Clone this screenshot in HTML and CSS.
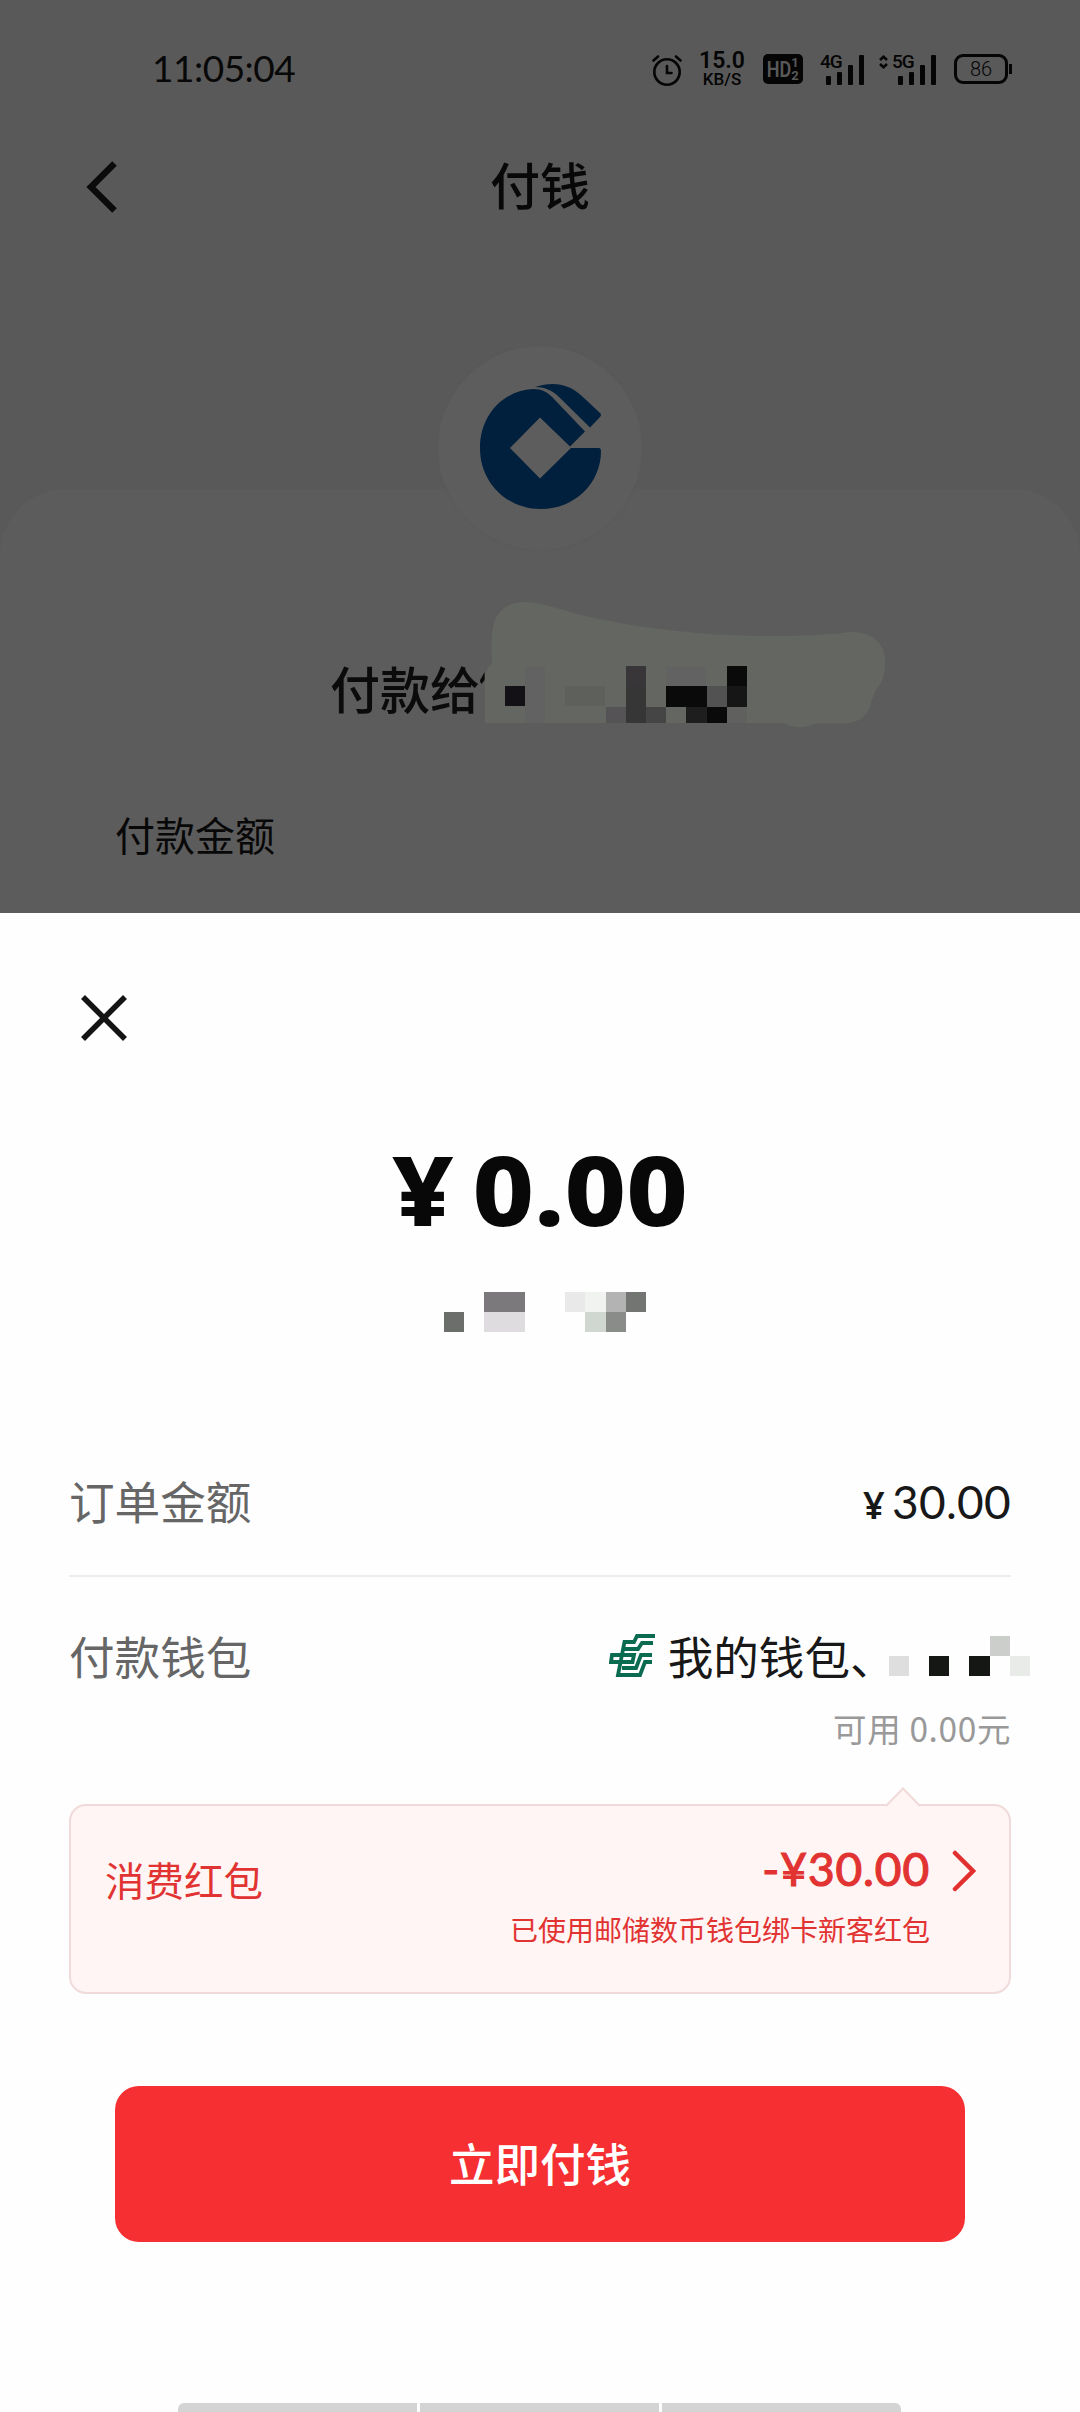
FILE: index.html
```html
<!DOCTYPE html>
<html lang="zh-CN">
<head>
<meta charset="utf-8">
<title>付钱</title>
<link rel="stylesheet" href="styles.css">
</head>
<body>
<div class="page">
  <header class="status">
    <div class="clock">11:05:04</div>
    <div class="indicators">
      <svg class="alarm" width="30" height="32" viewBox="0 0 30 32" fill="none" stroke="#050505" stroke-width="2.6" stroke-linecap="round"><circle cx="15" cy="18" r="12.7"/><path d="M15 12v7h4.500M1.500 6.500 6 2.500M28.500 6.500 24 2.500"/></svg>
      <div class="speed"><b>15.0</b><span>KB/S</span></div>
      <div class="hd"><span>HD</span><small><i>1</i><i>2</i></small></div>
      <div class="signal"><span class="net">4G</span><svg width="38" height="31" viewBox="0 0 38 31" fill="#050505"><rect x="0" y="22" width="5" height="9" rx="1"/><rect x="11" y="18" width="5" height="13" rx="1"/><rect x="22" y="11" width="5" height="20" rx="1"/><rect x="33" y="1" width="5" height="30" rx="1"/></svg></div>
      <div class="signal second"><svg class="updown" width="9" height="14" viewBox="0 0 9 14" fill="none" stroke="#050505" stroke-width="2.600"><path d="M1 5 4.500 1.800 8 5M1 9l3.500 3.200L8 9"/></svg><span class="net">5G</span><svg width="38" height="31" viewBox="0 0 38 31" fill="#050505"><rect x="0" y="22" width="5" height="9" rx="1"/><rect x="11" y="18" width="5" height="13" rx="1"/><rect x="22" y="11" width="5" height="20" rx="1"/><rect x="33" y="1" width="5" height="30" rx="1"/></svg></div>
      <div class="battery"><span>86</span></div>
    </div>
  </header>
  <nav class="titlebar">
    <svg width="32" height="52" viewBox="0 0 32 52" fill="none" stroke="#0b0b0b" stroke-width="6.500"><path d="M28.500 2.500 5 26l23.500 23.500"/></svg>
    <h1>付钱</h1>
  </nav>
  <section class="payee">
    <div class="avatar">
      <svg width="124" height="130" viewBox="0 0 124 130" fill="#00203d"><path d="M54 7C22 9 1 35 1 66c0 35 27 61 61 61 34 0 60-26 60-58 0-2-1-3-2-3H92L61 96.500 31 66 61 35.500 91 64.500 106 49.500 76 18C69 10 63 7 54 7Z"/><path d="M56 5c22-7 37-1 49 11l16 15q2 2 0 4l-10 10.500L80 15C73 8 65 5 56 5Z"/></svg>
    </div>
    <div class="payto">
      <span>付款给</span>
      <svg class="smudge" width="406" height="128" viewBox="480 601 406 128"><path fill="#0b0b0b" d="M484.600 672v8l-3 4-2-3Z"/><path fill="#646662" d="M492 663c-1-15-1-32 3-43 5-12 17-18 28-18 20 0 38 8 58 13 65 15 128 21 193 21 27 0 53-1 76-4 18-1 30 8 34 20 3 15 0 27-5 34-10 12-6 24-17 32-13 9-33 4-48 6-10 5-22 4-30-1H485v-49q2-6 7-11Z"/>
        <g shape-rendering="crispEdges"><path fill="#616261" d="M525 666h20v57h-20zM666 666h40v20h-40z"/><path fill="#5e605c" d="M565 686h40v20h-40z"/><path fill="#131016" d="M505 686h20v20h-20z"/><path fill="#39363a" d="M626 666h20v20h-20z"/><path fill="#363636" d="M626 686h20v37h-20z"/><path fill="#555355" d="M606 707h20v16h-20z"/><path fill="#454545" d="M646 707h20v16h-20z"/><path fill="#0a0a0a" d="M666 686h41v21h-41zM727 666h20v20h-20zM707 707h20v16h-20z"/><path fill="#525252" d="M707 686h20v21h-20z"/><path fill="#161616" d="M727 686h20v21h-20z"/><path fill="#1e1e1e" d="M686 707h21v16h-21z"/><path fill="#60605f" d="M727 707h20v16h-20z"/></g>
      </svg>
    </div>
    <p class="caption">付款金额</p>
  </section>
  <main class="sheet">
    <svg class="close" width="46" height="46" viewBox="0 0 46 46" fill="none" stroke="#141414" stroke-width="5.600"><path d="m2 2 42 42M44 2 2 44"/></svg>
    <div class="total"><span class="yen">¥</span><span>0.00</span></div>
    <div class="mask">
      <i></i><i></i><i class="g1"></i><i class="g1"></i><i></i><i></i><i class="g2"></i><i class="g3"></i><i class="g4"></i><i class="g5"></i>
      <i class="g6"></i><i></i><i class="g7"></i><i class="g7"></i><i></i><i></i><i></i><i class="g8"></i><i class="g9"></i><i></i>
    </div>
    <div class="row order"><span class="label">订单金额</span><span class="price"><span class="yen">¥</span>30.00</span></div>
    <div class="row wallet">
      <span class="label">付款钱包</span>
      <div class="source">
        <svg class="bank" width="46" height="44" viewBox="0 0 46 44" fill="none" stroke="#0b6b50" stroke-width="3.800"><path d="M46 2H28l-3 6H15.500L9 41h22l5-13h7M44 9H33l-4 6H14M43 21H32l-5 13H13M3 21h22l-1.500 7H2Z"/></svg>
        <span class="name">我的钱包、</span>
        <div class="mask wmask"><i></i><i></i><i></i><i></i><i></i><i class="w1"></i><i></i><i class="w2"></i><i></i><i class="w3"></i><i></i><i class="w3"></i><i></i><i class="w4"></i></div>
      </div>
    </div>
    <p class="avail">可用 0.00元</p>
    <div class="coupon">
      <svg class="tip" width="34" height="20" viewBox="0 0 34 20"><path fill="#fef5f4" stroke="#f0dada" stroke-width="2" d="M0 19 17 1.500 34 19"/></svg>
      <span class="cname">消费红包</span>
      <div class="cinfo"><strong>-¥30.00</strong><p>已使用邮储数币钱包绑卡新客红包</p></div>
      <svg class="more" width="24" height="42" viewBox="0 0 24 42" fill="none" stroke="#e23030" stroke-width="4.500" stroke-linecap="round"><path d="M3 3 21 21 3 39"/></svg>
    </div>
    <button class="pay">立即付钱</button>
    <div class="navbar"><i></i><i></i><i></i></div>
  </main>
</div>
</body>
</html>
```
FILE: styles.css
```css
* { box-sizing: border-box; margin: 0; padding: 0; }
body { font-family: "Noto Sans CJK SC", sans-serif; color: #080808; }
i { font-style: normal; }
svg { display: block; flex: none; }
.page { width: 1080px; height: 2412px; background: #595959; overflow: hidden; display: flex; flex-direction: column; }

.status { height: 140px; padding: 0 68px 0 152px; display: flex; justify-content: space-between; align-items: center; flex: none; }
.clock { font: 37px/1 Lato, sans-serif; letter-spacing: -.5px; padding-bottom: 5px; }
.indicators { display: flex; align-items: flex-start; height: 36px; padding-top: 2px; font-family: Roboto, sans-serif; color: #050505; }
.speed { width: 46px; margin: -4px 0 0 17px; display: flex; flex-direction: column; align-items: center; }
.speed b { font-size: 23px; line-height: 21px; font-weight: 600; }
.speed span { font-size: 17px; line-height: 17px; font-weight: 500; }
.hd { width: 40px; height: 30px; margin-left: 18px; border-radius: 5px; background: #050505; color: #595959; display: flex; align-items: center; justify-content: center; }
.hd span { font-size: 22px; font-weight: 600; transform: scaleX(.82); margin: 0 -3px; }
.hd small { display: flex; flex-direction: column; font-size: 13px; line-height: 13px; font-weight: 700; }
.signal { display: flex; align-items: flex-start; margin-left: 17px; }
.net { width: 22px; margin-right: -16px; font-size: 19px; line-height: 16px; letter-spacing: -1px; font-weight: 500; }
.signal.second { margin-left: 15px; }
.updown { margin: 1px 4px 0 0; }
.battery { width: 54px; height: 30px; margin: 0 4px 0 18px; border: 3px solid #050505; border-radius: 9px; position: relative; font-size: 20px; line-height: 24px; text-align: center; font-weight: 300; }
.battery::after { content: ""; position: absolute; right: -7px; top: 7px; width: 3px; height: 10px; background: #050505; }

.titlebar { height: 94px; display: grid; grid-template-columns: 120px 1fr 120px; align-items: center; flex: none; }
.titlebar svg { justify-self: end; margin-right: 2px; }
.titlebar h1 { font-size: 50px; line-height: 60px; font-weight: 500; text-align: center; padding-bottom: 8px; }

.payee { margin-top: 255px; height: 424px; background: #5c5c5c; border-radius: 66px 66px 0 0; display: flex; flex-direction: column; flex: none; }
.avatar { width: 204px; height: 204px; margin: -143px auto 0; border-radius: 50%; background: #5d5d5d; box-shadow: 0 0 2px #585858; display: flex; align-items: center; justify-content: center; flex: none; padding: 0 0 2px 2px; }
.payto { margin: 51px 0 0 330px; display: flex; height: 128px; color: #0b0b0b; }
.payto span { font-size: 50px; font-weight: 500; line-height: 60px; margin-top: 56px; width: 150px; white-space: nowrap; }
.caption { margin: 77px 0 0 115px; font-size: 40px; line-height: 56px; }

.sheet { flex: 1; background: #fefefe; display: flex; flex-direction: column; }
.close { margin: 82px 0 0 81px; }
.total { margin: 97px 0 0 0; height: 100px; display: flex; justify-content: center; gap: 17px; font: 800 97px/100px "Noto Sans", sans-serif; transform: scaleX(1.1); }
.mask { display: grid; grid-template-columns: repeat(10, 20.2px); grid-auto-rows: 20px; }
.sheet > .mask { margin: 54px 0 0 444px; }
.g1 { background: #7c797c; } .g2 { background: #e9e9e9; } .g3 { background: #f0f3f0; } .g4 { background: #b3b3b3; } .g5 { background: #737573; }
.g6 { background: #6c6e6c; } .g7 { background: #dfdce0; } .g8 { background: #d0d6d0; } .g9 { background: #8a8c89; }
.row { display: flex; justify-content: space-between; align-items: center; margin: 0 69px; font-size: 45.6px; line-height: 66px; color: #181818; flex: none; }
.label { color: #666; padding-bottom: 4px; }
.order { height: 149px; margin-top: 96px; border-bottom: 2px solid #ededed; }
.price { font: 46px/66px Lato, sans-serif; letter-spacing: .3px; padding-top: 3px; }
.price .yen { font: 600 38px/66px "Noto Sans", sans-serif; margin-right: 7px; }
.wallet { height: 160px; margin-right: 50px; }
.source { display: flex; align-items: center; }
.bank { margin-bottom: 2px; }
.name { margin-left: 13px; width: 221px; white-space: nowrap; padding-bottom: 4px; }
.wmask { grid-template-columns: repeat(7, 20.200px); margin-bottom: 2px; }
.w1 { background: #cbcecb; } .w2 { background: #dedede; } .w3 { background: #141714; } .w4 { background: #e8ebe8; }
.avail { margin: -33px 69px 0; text-align: right; font-size: 33.5px; line-height: 48px; letter-spacing: .6px; color: #999; }
.coupon { position: relative; margin: 52px 69px 0; height: 190px; border: 2px solid #f0dada; border-radius: 17px; background: #fef5f4; color: #e23333; display: flex; align-items: flex-start; padding: 0 33px 0 34px; flex: none; }
.tip { position: absolute; right: 89px; top: -19px; }
.cname { font-size: 39.5px; line-height: 56px; margin-top: 45px; }
.cinfo { margin-left: auto; text-align: right; display: flex; flex-direction: column; }
.cinfo strong { font: 400 46px/56px Lato, sans-serif; letter-spacing: .9px; -webkit-text-stroke: 1.2px; margin-top: 35px; }
.cinfo p { font-size: 28px; line-height: 40px; margin-top: 12px; }
.more { margin: 44px 0 0 22px; }
.pay { margin: 92px 115px 0; height: 156px; border: 0; border-radius: 24px; background: #f52f32; color: #fff; font: 500 45.5px/1 "Noto Sans CJK SC", sans-serif; flex: none; padding-bottom: 2px; }
.navbar { margin: auto 179px 0 178px; height: 9px; display: flex; gap: 3px; border-radius: 6px 6px 0 0; overflow: hidden; }
.navbar i { flex: 1; background: #d4d4d4; }
```
